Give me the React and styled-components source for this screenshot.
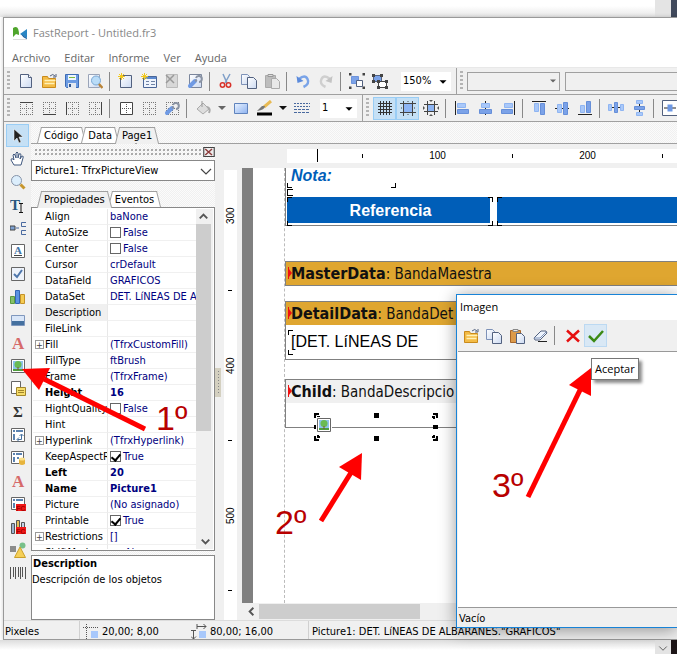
import React from 'react'
import styled, { createGlobalStyle, css } from 'styled-components';

const ui = '"DejaVu Sans Condensed", "DejaVu Sans", sans-serif';
const caption = '"Open Sans", "Noto Sans", sans-serif';
const arial = '"Liberation Sans", Arial, sans-serif';
const serif = '"Liberation Serif", serif';

/* ---------- icons ---------- */

const sheet = <path d="M2.500 1.500h8l3 3v10h-11z" fill="url(#paper)" stroke="#52617f"/>;
const dots = <path d="M2 2.500h13M2 8.500h13M2 14.500h13M2.500 2v13M8.500 2v13M14.500 2v13" stroke="#777" strokeDasharray="1 1"/>;
const wrench = <path d="M3 13l5-5" stroke="#6f9ae4" strokeWidth="4" strokeLinecap="round"/>;
const wrenchHead = <path d="M8 8l2-1M9 5a3 3 0 1 1 3 4" stroke="#8a93a3" strokeWidth="2" fill="none"/>;
const star = <path d="M3.500 0v7M0 3.500h7M1 1l5 5M6 1L1 6" stroke="#f2c81c" strokeWidth="1"/>;
const fcBadge = (
    <>
        <path d="M6 8h10v7H6z" fill="#f01818"/>
        <text x="6" y="15" fontFamily={arial} fontSize="7" fontWeight="bold" fill="#a00">FC</text>
    </>
);

const alignIcon = (line, a, b) => (
    <>
        <path d={line} stroke="#222"/>
        <path d={a} fill="#a9c8f9" stroke="#8fb5f2"/>
        <path d={b} fill="#7ba2e8" stroke="#668fd9"/>
    </>
);

const icons = {
    logo: <><path d="M1 3q6-4 6 7l-3-1-3 3z" fill="#4fa52c"/><path d="M15 4v9L8 9z" fill="#2a86c4"/><path d="M9 9l6 4v1q-4-1-6-5z" fill="#1b5f9e"/><path d="M1 14.500h14" stroke="#ddd"/></>,
    page: <>{sheet}<path d="M10.500 1.500v3h3" fill="#fff" stroke="#52617f"/></>,
    open: <><path d="M1.500 14.500v-11h5l1 2h7v9z" fill="#f3bb45" stroke="#c98a1b"/><path d="M3.500 7.500h11M3.500 10.500h10" stroke="#fff1b8" strokeWidth="1.500"/><path d="M9 3q3-3 5 0M15 1v3h-3" stroke="#52617f" fill="none"/></>,
    save: <><path d="M1.500 1.500h13v13h-12l-1-1z" fill="#6c9be2" stroke="#3d6cb5"/><path d="M4 2h8v5H4z" fill="#eef6ff"/><path d="M5 4.500h6" stroke="#7cba3d"/><path d="M4 10h8v5H4z" fill="#e4e9f0"/><path d="M6 11v3" stroke="#33578f" strokeWidth="2"/></>,
    preview: <><path d="M1.500 1.500h11v13h-11z" fill="url(#paper)" stroke="#9aa4b8"/><circle cx="9" cy="7.500" r="4.500" fill="#b9dcf8" stroke="#7ba8d4"/><path d="M12 11l3.500 4" stroke="#b98438" strokeWidth="2.500"/></>,
    newPage: <><path d="M2.500 2.500h11v12h-11z" fill="url(#paper)" stroke="#52617f"/>{star}</>,
    newDialog: <><path d="M2.500 3.500h13v11h-13z" fill="#eef4fd" stroke="#4a6698"/><path d="M3 5h12" stroke="#5d8ad0" strokeWidth="2"/><path d="M5 8.500h3M5 11.500h3M10 8.500h4M10 11.500h4" stroke="#6e82a5"/>{star}</>,
    removePage: <><path d="M2.500 1.500h11v13h-11z" fill="#d8d8d8" stroke="#bbb"/><path d="M2 2l8 8M10 2l-8 8" stroke="#999" strokeWidth="1.500"/></>,
    pageSetup: <><path d="M2.500 1.500h12v13h-12z" fill="url(#paper)" stroke="#7b869c"/>{wrench}{wrenchHead}</>,
    cut: <><path d="M5 1l4 9M12 1L7 10" stroke="#7f9fc8" strokeWidth="1.500"/><circle cx="4.500" cy="12" r="2.200" fill="none" stroke="#d8322a" strokeWidth="1.500"/><circle cx="10.500" cy="12" r="2.200" fill="none" stroke="#d8322a" strokeWidth="1.500"/></>,
    copy: <><path d="M.5 1.500h6l2 2v8h-8z" fill="url(#paper)" stroke="#7e92b8"/><path d="M6.500 4.500h6l3 3v8h-9z" fill="url(#paper)" stroke="#52617f"/></>,
    pasteOff: <><path d="M1.500 2.500h10v12h-10z" fill="#bdbdbd" stroke="#aaa"/><path d="M4 1.500h5v2H4z" fill="#ddd" stroke="#999"/><path d="M7.500 5.500h5l3 3v7h-8z" fill="#e8e8e8" stroke="#aaa"/></>,
    paste: <><path d="M1.500 2.500h10v12h-10z" fill="#dc9a4a" stroke="#a8672a"/><path d="M4 1.500h5v2H4z" fill="#eee" stroke="#888"/><path d="M7.500 5.500h5l3 3v7h-8z" fill="url(#paper)" stroke="#52617f"/></>,
    undo: <><path d="M4 6q6-5 8.500 0t-4 8" fill="none" stroke="#7aa4e8" strokeWidth="2.500"/><path d="M1.500 3l1 7 6-2z" fill="#5c8bdc"/></>,
    redo: <><path d="M12 6q-6-5-8.500 0t4 8" fill="none" stroke="#cfcfcf" strokeWidth="2.500"/><path d="M14.500 3l-1 7-6-2z" fill="#c4c4c4"/></>,
    group: <><path d="M2.500 3.500h7v7h-7z" fill="#7ba2e8" stroke="#6d93dc"/><path d="M7.500 7.500h6v6h-6z" fill="#fff" stroke="#52617f"/><path d="M0 0h2.500v2.500H0zM13.500 0H16v2.500h-2.500zM0 13.500h2.500V16H0zM13.500 13.500H16V16h-2.500z" fill="#444"/></>,
    ungroup: <><path d="M1.500 2.500h8v6h-8z" fill="#7ba2e8" stroke="#52617f"/><path d="M6.500 8.500h8v6h-8z" fill="#fff" stroke="#444"/><path d="M0 1h3v3H0zM8 1h3v3H8zM0 7h3v3H0zM5 7h3v3H5zM13 7h3v3h-3zM5 13h3v3H5zM13 13h3v3h-3z" fill="#444"/></>,
    frameTop: <>{dots}<path d="M2 2.500h13" stroke="#444"/></>,
    frameBottom: <>{dots}<path d="M2 14.500h13" stroke="#444"/></>,
    frameLeft: <>{dots}<path d="M2.500 2v13" stroke="#444"/></>,
    frameRight: <>{dots}<path d="M14.500 2v13" stroke="#444"/></>,
    frameAll: <><path d="M2.500 2.500h12v12h-12z" fill="#fff" stroke="#444"/><path d="M4 8.500h9M8.500 4v9" stroke="#555" strokeDasharray="1 1"/></>,
    frameNone: dots,
    frameEdit: <>{dots}{wrench}{wrenchHead}</>,
    fill: <><path d="M2 9l6-6 6 6-6 5z" fill="#ddd" stroke="#aaa"/><path d="M7 1v6" stroke="#999"/><path d="M12 7q4 1 2 6" stroke="#aaa" strokeWidth="2" fill="none"/></>,
    rect: <path d="M1.500 3.500h13v10h-13z" fill="url(#blue)" stroke="#5f83bd"/>,
    brush: <><path d="M15 1L8 7" stroke="#e8ba53" strokeWidth="3"/><path d="M9 6q0 4-8 5l5-5z" fill="#777"/><path d="M1 14h15" stroke="#000" strokeWidth="3"/></>,
    lines: <><path d="M0 3.500h16M0 6.500h16" stroke="#49699f" strokeDasharray="2 1"/><path d="M0 9.500h16M0 12.500h16" stroke="#49699f" strokeDasharray="3 1"/></>,
    grid: <path d="M3.500 1v14M6.500 1v14M9.500 1v14M12.500 1v14M1 3.500h14M1 6.500h14M1 9.500h14M1 12.500h14" stroke="#333"/>,
    snap: <><path d="M4 4h8v8H4z" fill="#8db5f4"/><path d="M3.500 1v15M12.500 1v15M0 3.500h16M0 12.500h16" stroke="#444"/><path d="M1 8h1M8 1v1M14 8h1M8 14v1" stroke="#444"/></>,
    fit: <><path d="M4 4h8v8H4z" fill="#8db5f4"/><path d="M4.500 1v14M11.500 1v14M1 4.500h14M1 11.500h14" stroke="#444"/><path d="M0 6l2 2-2 2M16 6l-2 2 2 2M6 0l2 2 2-2M6 16l2-2 2 2" fill="#555"/></>,
    left: alignIcon('M1.500 1v14', 'M3.500 3.500h8v4h-8z', 'M3.500 9.500h11v4h-11z'),
    center: alignIcon('M8.500 1v14', 'M4.500 3.500h8v4h-8z', 'M2.500 9.500h12v4h-12z'),
    right: alignIcon('M14.500 1v14', 'M4.500 3.500h8v4h-8z', 'M1.500 9.500h11v4h-11z'),
    top: alignIcon('M1 1.500h14', 'M3.500 3.500h4v8h-4z', 'M9.500 3.500h4v11h-4z'),
    middle: alignIcon('M1 8.500h14', 'M3.500 4.500h4v8h-4z', 'M9.500 2.500h4v12h-4z'),
    bottom: alignIcon('M1 14.500h14', 'M3.500 5.500h4v7h-4z', 'M9.500 1.500h4v11h-4z'),
    spaceH: alignIcon('M1 7.500h14', 'M.5 4.500h3v6h-3zM12.500 4.500h3v6h-3z', 'M6.500 2.500h3v10h-3z'),
    spaceV: alignIcon('M8.500 1v14', 'M5.500.5h6v3h-6zM5.500 12.500h6v3h-6z', 'M3.500 6.500h10v3h-10z'),
    centerH: <><path d="M.5.5h15v15H.5z" fill="#fff" stroke="#52617f"/><path d="M2 8h12" stroke="#222"/><path d="M5.500 4.500h5v7h-5z" fill="#6d98e4"/></>,

    pointer: <path d="M4 1v12l3-3 2 5 2-1-2-5h4z" fill="#222" stroke="#fff" strokeWidth=".5"/>,
    hand: <path d="M4 14l-3-5q0-2 2-1l1 1-1-5q1-2 2 0l1 3V2q1-2 2 0v5l1-4q2-1 2 1l-1 4 2-3q2 0 1 2l-2 7z" fill="#fff" stroke="#41597f"/>,
    zoom: <><circle cx="6.500" cy="6.500" r="5" fill="#dceefc" stroke="#8693a8"/><path d="M10.500 10.500l4 4" stroke="#c7962d" strokeWidth="3"/></>,
    textEdit: <><text x="0" y="13" fontFamily={serif} fontSize="15" fontWeight="bold" fill="#28567e">T</text><path d="M9 6.500h4M11 7v8M9 15.500h4" stroke="#111"/></>,
    band: <><path d="M0 6h5v4H0z" fill="#7da1d3" stroke="#444"/><path d="M6 8h3M16 2.500h-4.500v4H16M16 10.500h-4.500v4H16" stroke="#49699f" fill="none"/></>,
    memo: <><path d="M1.500 1.500h13v13h-13z" fill="#fff" stroke="#666"/><text x="4" y="11" fontFamily={serif} fontSize="11" fontWeight="bold" fill="#3f73a5">A</text><path d="M4 12.500h8" stroke="#444"/></>,
    check: <><path d="M1.500 1.500h13v13h-13z" fill="#edf2fa" stroke="#666"/><path d="M4 8l3 3 5-7" stroke="#4d76ac" strokeWidth="2" fill="none"/></>,
    chart: <><path d="M.5 7.500h4v7h-4z" fill="#85c168" stroke="#5b9a40"/><path d="M5.500 1.500h4v13h-4z" fill="#5b93e2" stroke="#3467b4"/><path d="M10.500 5.500h4v9h-4z" fill="#f5cb52" stroke="#c4922a"/></>,
    bandGroup: <><path d="M1.500 3.500h13v10h-13z" fill="#d9e6f8" stroke="#7f97bd"/><path d="M2 9h12v4H2z" fill="#44709f"/></>,
    richText: <text x="2" y="14" fontFamily={serif} fontSize="17" fontWeight="bold" fill="#d66a6a">A</text>,
    picture: <><path d="M1.500 1.500h13v13h-13z" fill="#fff" stroke="#666"/><path d="M3 3h10v10H3z" fill="#8ec3ec"/><path d="M3 11h10v2H3z" fill="#4f9e3d"/><circle cx="8" cy="6.500" r="3.500" fill="#6abb52"/><path d="M8 9v3" stroke="#7a5326"/></>,
    subreport: <><path d="M1.500.5h9v12h-9z" fill="#fff" stroke="#666"/><path d="M6.500 6.500h9v8h-9z" fill="#f7dd6a" stroke="#a2862a"/><path d="M8 9.500h6M8 11.500h6" stroke="#a2862a"/></>,
    sum: <text x="3" y="13" fontFamily={serif} fontSize="15" fontWeight="bold" fill="#333">Σ</text>,
    cross: <><path d="M1.500 1.500h13v13h-13z" fill="#fff" stroke="#666"/><path d="M3 4h2M6 4h7M4 7v6" stroke="#5c83b0" strokeWidth="2"/><path d="M7.500 12.500h4v-5M9.500 9l2-2 2 2M9 10.500l-2 2 2 2" stroke="#44709f" fill="none"/></>,
    dbCross: <><path d="M1.500 1.500h12v12h-12z" fill="#fff" stroke="#666"/><path d="M3 4h2M6 4h6M4 7v5M7 8h2" stroke="#5c83b0" strokeWidth="2"/><path d="M9 9v5q3 2 6 0V9z" fill="#e7b43d"/><ellipse cx="12" cy="9" rx="3" ry="1.500" fill="#fbe08a"/></>,
    fcTable: <><path d="M1.500 1.500h13v12h-13z" fill="#fff" stroke="#666"/><path d="M3 4h2M6 4h7M4 7v5" stroke="#5c83b0" strokeWidth="2"/>{fcBadge}</>,
    fcChart: <><path d="M1.500 4.500h3v10h-3z" fill="#9ab0cf" stroke="#555"/><path d="M6.500 1.500h3v12h-3z" fill="#e5bf5c" stroke="#555"/><path d="M11.500 3.500h3v10h-3z" fill="#c5d3e8" stroke="#555"/>{fcBadge}</>,
    shapes: <><path d="M0 4h6v6H0z" fill="#8b8b8b"/><circle cx="12.500" cy="3.500" r="3" fill="#78c08a"/><path d="M10 5l5.500 10.500h-11z" fill="#f5cf57" stroke="#caa02a"/></>,
    barcode: <path d="M.5 2v12M3.500 2v10M5.500 2v12M8.500 2v10M10.500 2v12M12.500 2v10M15.500 2v12" stroke="#555"/>,

    erase: <><path d="M2 10l7-7h5l1 2-7 7H3z" fill="#eef4fd" stroke="#52617f"/><path d="M2 10h6l6-6" stroke="#7e92b8" fill="none"/><path d="M6 13.500h9" stroke="#222"/></>,
    cancel: <path d="M2 2.500l12 11M14 2.500l-12 11" stroke="#e60f0f" strokeWidth="2.500"/>,
    accept: <path d="M1 8l5 5 9-10" fill="none" stroke="#3b8a14" strokeWidth="2.500"/>,
    position: <><path d="M0 3.500h16M3.500 0v16" stroke="#555" strokeDasharray="1 1"/><path d="M8 7h7v7H8z" fill="#a8c8fb"/></>,
    size: <><path d="M6 2.500h9M12.500 0L15 2.500 12.500 5M6 0v5M2.500 6v9M0 12.500L2.500 15 5 12.500M0 6.500h5" stroke="#555" fill="none"/><path d="M8 7h7v7H8z" fill="#a8c8fb"/></>,
    closePanel: <><path d="M1 2h14v12H1z" fill="#eee" stroke="#444" strokeWidth="1.500"/><path d="M3 4l9 8M12 4l-9 8" stroke="#8c3a3a" strokeWidth="2"/></>,
    down: <path d="M4 6h8l-4 4z" fill="currentColor"/>,
    chevronDown: <path d="M3 6l5 5 5-5" fill="none" stroke="currentColor" strokeWidth="1.200"/>,
    chevronUp: <path d="M4 10l4-4 4 4" fill="none" stroke="currentColor" strokeWidth="2"/>,
    chevronLeft: <path d="M10 4L6 8l4 4" fill="none" stroke="currentColor" strokeWidth="2"/>,
};

const Svg = styled.svg`
    display: block;
    flex: none;
    width: ${p => p.$size || 16}px;
    height: ${p => p.$size || 16}px;
`;

const Icon = ({ name, size }) => <Svg viewBox="0 0 16 16" $size={size} aria-hidden="true">{icons[name]}</Svg>;

/* ---------- data ---------- */

const tools = ['pointer', 'hand', 'zoom', 'textEdit', 'band', 'memo', 'check', 'chart', 'bandGroup', 'richText', 'picture',
    'subreport', 'sum', 'cross', 'dbCross', 'richText', 'fcTable', 'fcChart', 'shapes', 'barcode'];

const properties = [
    { name: 'Align', value: 'baNone' },
    { name: 'AutoSize', checked: false },
    { name: 'Center', checked: false },
    { name: 'Cursor', value: 'crDefault' },
    { name: 'DataField', value: 'GRAFICOS' },
    { name: 'DataSet', value: 'DET. LíNEAS DE ALBARANES' },
    { name: 'Description', value: '', selected: true },
    { name: 'FileLink', value: '' },
    { name: 'Fill', value: '(TfrxCustomFill)', expand: true },
    { name: 'FillType', value: 'ftBrush' },
    { name: 'Frame', value: '(TfrxFrame)', expand: true },
    { name: 'Height', value: '16', bold: true },
    { name: 'HightQuality', checked: false },
    { name: 'Hint', value: '' },
    { name: 'Hyperlink', value: '(TfrxHyperlink)', expand: true },
    { name: 'KeepAspectRatio', checked: true },
    { name: 'Left', value: '20', bold: true },
    { name: 'Name', value: 'Picture1', bold: true },
    { name: 'Picture', value: '(No asignado)' },
    { name: 'Printable', checked: true },
    { name: 'Restrictions', value: '[]', expand: true },
    { name: 'ShiftMode', value: 'smAlways' },
];

function Tools({ names, pressed = [] }) {
    return names.map((name, i) => (
        name === '|'
            ? <Separator key={i} />
            : <ToolButton key={i} aria-label={name} $pressed={pressed.includes(name)}><Icon name={name} /></ToolButton>
    ))
}

function PropertyRow({ name, value, checked, expand, selected, bold }) {
    return (
        <tr>
            <NameCell $selected={selected} $bold={bold}>
                <div>
                    <ExpandSlot>{expand && <ExpandButton aria-label={`Expand ${name}`}>+</ExpandButton>}</ExpandSlot>
                    {name}
                </div>
            </NameCell>
            <ValueCell $bold={bold}>
                {checked === undefined ? <div>{value}</div> : (
                    <CheckLabel><CheckBox type="checkbox" defaultChecked={checked} />{checked ? 'True' : 'False'}</CheckLabel>
                )}
            </ValueCell>
        </tr>
    )
}

function Inspector() {
    return (
        <InspectorStyled>
            <Grip><i /><button aria-label="Cerrar"><Icon name="closePanel" size={12} /></button></Grip>
            <ObjectSelect>
                <select aria-label="Objeto"><option>Picture1: TfrxPictureView</option></select>
                <Icon name="chevronDown" />
            </ObjectSelect>
            <TabRow $inner>
                <Tab $active>Propiedades</Tab>
                <Tab>Eventos</Tab>
            </TabRow>
            <PropertyBox>
                <TableClip>
                    <PropertyTable>
                        <tbody>{properties.map(p => <PropertyRow key={p.name} {...p} />)}</tbody>
                    </PropertyTable>
                </TableClip>
                <ScrollV>
                    <button aria-label="Subir"><Icon name="chevronUp" size={15} /></button>
                    <ThumbV />
                    <button aria-label="Bajar"><Icon name="chevronUp" size={15} /></button>
                </ScrollV>
            </PropertyBox>
            <HelpBox>
                <strong>Description</strong>
                <p>Descripción de los objetos</p>
            </HelpBox>
        </InspectorStyled>
    )
}

const BandHeader = ({ type, name, plain }) => (
    <BandTitle $plain={plain}>
        <svg width="5" height="13" viewBox="0 0 5 13" aria-hidden="true"><path d="M0 0h1v12H0zM1 2l3 4-3 4z" fill="#f01010"/></svg>
        <b>{type}</b>: <span>{name}</span>
    </BandTitle>
);

function Designer() {
    return (
        <DesignerStyled>
            <RulerH>
                <div>
                    <CursorMark />
                    <span><Tick /></span><span>100</span><span><Tick /></span><span>200</span><span><Tick /></span>
                </div>
            </RulerH>
            <DesignRow>
                <RulerV><span>300</span><span><Tick /></span><span>400</span><span><Tick /></span><span>500</span><span><Tick /></span></RulerV>
                <CanvasColumn>
                    <Canvas>
                        <Margin>
                            <HeaderBand>
                                <NoteMemo>Nota:</NoteMemo>
                                <EmptyMemo />
                                <MemoRow>
                                    <HeadMemo $width={206}><div>Referencia</div></HeadMemo>
                                    <HeadMemo><div /></HeadMemo>
                                </MemoRow>
                            </HeaderBand>
                            <Band $gap={35}><BandHeader type="MasterData" name="BandaMaestra" /></Band>
                            <Band $gap={15}>
                                <BandHeader type="DetailData" name="BandaDet" />
                                <BandBody><LineMemo>[DET. LíNEAS DE</LineMemo></BandBody>
                            </Band>
                            <Band $gap={19}>
                                <BandHeader type="Child" name="BandaDescripcio" plain />
                                <BandBody $short>
                                    <Selection viewBox="0 0 124 28" aria-hidden="true">
                                        <path d="M0 0h5v5H0zM60 0h5v5h-5zM119 0h5v5h-5zM0 12h5v4H0zM119 12h5v4h-5zM0 23h5v5H0zM60 23h5v5h-5zM119 23h5v5h-5z" />
                                        <path d="M2.500 8v-5.500h6M2.500 20v5.500h6M121.500 8v-5.500h-6M121.500 20v5.500h-6" fill="none" stroke="#fff" />
                                        <path d="M3 5.500h2M5.500 3v2M3 22.500h2M5.500 23v2M119 5.500h2M118.500 3v2M119 22.500h2M118.500 23v2" stroke="#000" />
                                    </Selection>
                                    <PictureBadge><Icon name="picture" /></PictureBadge>
                                </BandBody>
                            </Band>
                        </Margin>
                    </Canvas>
                    <ScrollH><button aria-label="Izquierda"><Icon name="chevronLeft" size={15} /></button><ThumbH /></ScrollH>
                </CanvasColumn>
            </DesignRow>
        </DesignerStyled>
    )
}

function ImageDialog() {
    return (
        <DialogStyled role="dialog" aria-label="Imagen">
            <DialogTitle>Imagen</DialogTitle>
            <DialogBar>
                <Tools names={['open', 'copy', 'paste', 'erase', '|', 'cancel', 'accept']} pressed={['accept']} />
            </DialogBar>
            <DialogBody />
            <DialogStatus>Vacío</DialogStatus>
            <Tooltip role="tooltip">Aceptar</Tooltip>
        </DialogStyled>
    )
}

function App() {
    return (
        <Page>
            <GlobalStyle />
            <Defs aria-hidden="true">
                <defs>
                    <linearGradient id="paper" x2="1" y2="1"><stop stopColor="#fff"/><stop offset="1" stopColor="#ccdaf2"/></linearGradient>
                    <linearGradient id="blue" x2="1" y2="1"><stop stopColor="#eaf3ff"/><stop offset="1" stopColor="#8db2f0"/></linearGradient>
                </defs>
            </Defs>
            <Backdrop><i /><b /></Backdrop>
            <Window>
                <TitleBar><Icon name="logo" /><span>FastReport - Untitled.fr3</span></TitleBar>
                <MenuBar>
                    {['Archivo', 'Editar', 'Informe', 'Ver', 'Ayuda'].map(m => <button key={m}>{m}</button>)}
                </MenuBar>
                <ToolRow>
                    <ToolBar>
                        <Tools names={['page', 'open', 'save', 'preview', '|', 'newPage', 'newDialog', 'removePage', 'pageSetup', '|',
                            'cut', 'copy', 'pasteOff', '|', 'undo', 'redo', '|', 'group', 'ungroup']} />
                        <Combo $width={50} $gap={10}><select aria-label="Zoom"><option>150%</option></select><Icon name="down" size={14} /></Combo>
                    </ToolBar>
                    <ToolBar $last>
                        <Combo $width={93} $gap={0} $disabled><select aria-label="Estilo" disabled /><Icon name="down" size={12} /></Combo>
                        <Combo $width={180} $gap={5} $disabled><select aria-label="Fuente" disabled /><Icon name="down" size={12} /></Combo>
                    </ToolBar>
                </ToolRow>
                <ToolRow>
                    <ToolBar>
                        <Tools names={['frameTop', 'frameBottom', 'frameLeft', 'frameRight', '|', 'frameAll', 'frameNone', 'frameEdit', '|', 'fill']} />
                        <DropButton aria-label="Color de relleno" $muted><Icon name="down" /></DropButton>
                        <Tools names={['rect', 'brush']} />
                        <DropButton aria-label="Color de marco"><Icon name="down" /></DropButton>
                        <Tools names={['lines']} />
                        <Combo $width={37} $gap={7}><select aria-label="Ancho"><option>1</option></select><Icon name="down" size={14} /></Combo>
                    </ToolBar>
                    <ToolBar $last>
                        <Tools names={['grid', 'snap', 'fit', '|', 'left', 'center', 'right', '|', 'top', 'middle', 'bottom', '|',
                            'spaceH', 'spaceV', '|', 'centerH']} pressed={['grid', 'snap']} />
                    </ToolBar>
                </ToolRow>
                <Workspace>
                    <Palette>
                        {tools.map((name, i) => <ToolButton key={i} aria-label={name} $pressed={i === 0}><Icon name={name} /></ToolButton>)}
                    </Palette>
                    <Main>
                        <TabRow>
                            <Tab>Código</Tab>
                            <Tab>Data</Tab>
                            <Tab $active>Page1</Tab>
                        </TabRow>
                        <Panels>
                            <Inspector />
                            <Splitter><i /></Splitter>
                            <Designer />
                        </Panels>
                    </Main>
                </Workspace>
                <StatusBar>
                    <StatusCell $width={75}>Pixeles</StatusCell>
                    <StatusCell $width={229}>
                        <Icon name="position" /><StatusValue>20,00; 8,00</StatusValue>
                        <Icon name="size" /><StatusValue>80,00; 16,00</StatusValue>
                    </StatusCell>
                    <StatusCell>Picture1: DET. LíNEAS DE ALBARANES."GRAFICOS"</StatusCell>
                </StatusBar>
            </Window>
            <Backdrop $bottom><i><Icon name="chevronDown" size={12} /></i><b /></Backdrop>

            <ImageDialog />

            <Arrow $x={22} $y={367} width="128" height="68" aria-hidden="true">
                <path d="M22 12L123 62" stroke="#f00" strokeWidth="5" /><path d="M0 2l28-1-11 22z" fill="#f00" />
            </Arrow>
            <Step $x={156} $y={399}>1º</Step>
            <Arrow $x={318} $y={453} width="48" height="72" aria-hidden="true">
                <path d="M3 68L34 18" stroke="#f00" strokeWidth="5" /><path d="M44 0L21 14l22 13z" fill="#f00" />
            </Arrow>
            <Step $x={275} $y={503}>2º</Step>
            <Arrow $x={525} $y={368} width="68" height="132" aria-hidden="true">
                <path d="M3 129L56 20" stroke="#f00" strokeWidth="5" /><path d="M66 0L44 17l22 11z" fill="#f00" />
            </Arrow>
            <Step $x={492} $y={466}>3º</Step>
        </Page>
    )
}

/* ---------- styles ---------- */

const GlobalStyle = createGlobalStyle`
    *{
        box-sizing: border-box;
    }
    body{
        margin: 0;
        background: #fff;
        font: 11px/16px ${ui};
        color: #000;
    }
    button, select, input{
        margin: 0;
        padding: 0;
        border: 0;
        border-radius: 0;
        background: none;
        color: inherit;
        font: inherit;
        appearance: none;
    }
    p{
        margin: 0;
    }
`;

const checker = css`
    background: repeating-conic-gradient(#f0f0f0 0 25%, #fbfbfb 0 50%) 0 0/2px 2px;
`;

const Page = styled.div`
    position: relative;
    display: flex;
    flex-direction: column;
    height: 100vh;
    min-height: 640px;
    overflow: hidden;
`;

const Defs = styled.svg`
    position: absolute;
    width: 0;
    height: 0;
`;

const Backdrop = styled.div`
    display: flex;
    justify-content: flex-end;
    height: ${p => p.$bottom ? 14 : 17}px;
    background: ${p => p.$bottom ? 'linear-gradient(#ddd, #fff 10px)' : 'linear-gradient(#fff 6px, #e6e6e6)'};
    i{
        display: flex;
        align-items: flex-end;
        justify-content: center;
        width: 16px;
        background: #e4e4e4;
        color: #555;
    }
    b{
        width: 6px;
        background: ${p => p.$bottom ? '#1d1517' : '#414a5c'};
    }
`;

const Window = styled.main`
    flex: 1;
    min-height: 0;
    display: flex;
    flex-direction: column;
    margin-left: 3px;
    border: 1px solid #999;
    border-right: 0;
    background: #f0f0f0;
    box-shadow: 0 0 4px rgba(0, 0, 0, .2);
`;

const TitleBar = styled.header`
    display: flex;
    align-items: center;
    gap: 5px;
    height: 29px;
    padding-left: 8px;
    background: #fff;
    color: #888;
    font-family: ${caption};
`;

const MenuBar = styled.nav`
    display: flex;
    height: 21px;
    padding: 2px 0 0 1px;
    border-bottom: 1px solid #e8e8e8;
    background: #fff;
    button{
        padding: 0 7px;
        color: #666;
        font-family: ${caption};
    }
`;

const ToolRow = styled.div`
    display: flex;
    height: 27px;
    border-bottom: 1px solid #a0a0a0;
    overflow: hidden;
`;

const ToolBar = styled.div`
    display: flex;
    align-items: center;
    flex: ${p => p.$last ? '1 0 auto' : 'none'};
    padding-right: 5px;
    border-right: ${p => p.$last ? 0 : '1px solid #a0a0a0'};
    &::before{
        content: '';
        width: 3px;
        height: 20px;
        margin: 0 4px 0 3px;
        background: repeating-linear-gradient(#b4b4b4 0 2px, transparent 2px 4px);
    }
`;

const ToolButton = styled.button`
    display: flex;
    align-items: center;
    justify-content: center;
    flex: none;
    width: 23px;
    height: 23px;
    ${p => p.$pressed && css`
        border: 1px solid #99cdf5;
        background: #c5e0f5;
    `}
`;

const DropButton = styled(ToolButton)`
    width: 15px;
    color: ${p => p.$muted ? '#666' : '#111'};
`;

const Separator = styled.span`
    flex: none;
    width: 1px;
    height: 19px;
    margin: 0 4px 0 3px;
    background: #888;
`;

const Combo = styled.div`
    position: relative;
    flex: none;
    width: ${p => p.$width}px;
    height: 19px;
    margin-left: ${p => p.$gap}px;
    border: 1px solid ${p => p.$disabled ? '#a0a0a0' : '#fff'};
    background: ${p => p.$disabled ? '#f0f0f0' : '#fff'};
    color: ${p => p.$disabled ? '#666' : '#000'};
    select{
        width: 100%;
        height: 17px;
        padding-left: 1px;
    }
    svg{
        position: absolute;
        right: 0;
        top: 2px;
        pointer-events: none;
    }
`;

const Workspace = styled.div`
    flex: 1;
    min-height: 0;
    display: flex;
`;

const Palette = styled.div`
    flex: none;
    width: 27px;
    padding: 2px;
    overflow: hidden;
`;

const Main = styled.div`
    flex: 1;
    min-width: 0;
    display: flex;
    flex-direction: column;
`;

const TabRow = styled.div`
    display: flex;
    align-items: flex-end;
    flex: none;
    height: ${p => p.$inner ? 26 : 22}px;
    padding-left: 9px;
    border-bottom: ${p => p.$inner ? 0 : '1px solid #a0a0a0'};
    ${checker}
`;

const Tab = styled.button`
    position: relative;
    z-index: ${p => p.$active ? 2 : 1};
    isolation: isolate;
    height: ${p => p.$active ? 17 : 16}px;
    margin: 0 0 ${p => p.$active ? -1 : 0}px -2px;
    padding: 1px 6px 0;
    line-height: 16px;
    &::before, &::after{
        content: '';
        position: absolute;
        z-index: -1;
        top: 0;
        bottom: 0;
        border: solid #a0a0a0;
        background: ${p => p.$active ? '#f0f0f0' : '#fff'};
    }
    &::before{
        left: 1px;
        right: 50%;
        border-width: 1px 0 0 1px;
        transform: skewX(-14deg);
    }
    &::after{
        left: 45%;
        right: 1px;
        border-width: 1px 1px 0 0;
        transform: skewX(14deg);
    }
`;

const Panels = styled.div`
    flex: 1;
    min-height: 0;
    display: flex;
`;

const InspectorStyled = styled.section`
    flex: none;
    display: flex;
    flex-direction: column;
    width: 184px;
    ${checker}
`;

const Grip = styled.div`
    display: flex;
    align-items: center;
    height: 16px;
    padding: 0 0 0 3px;
    i{
        flex: 1;
        height: 8px;
        background: radial-gradient(#aaa 1px, transparent 1px) 0 0/4px 4px;
    }
    button{
        margin-left: 2px;
    }
`;

const ObjectSelect = styled.div`
    position: relative;
    height: 21px;
    border: 1px solid #888;
    background: #fff;
    select{
        width: 100%;
        height: 19px;
        padding-left: 3px;
    }
    svg{
        position: absolute;
        right: 0;
        top: 2px;
        color: #444;
        pointer-events: none;
    }
`;

const PropertyBox = styled.div`
    flex: 1;
    min-height: 0;
    display: flex;
    padding: 1px;
    border: 1px solid #888;
    background: #fff;
`;

const TableClip = styled.div`
    flex: 1;
    min-width: 0;
    overflow: hidden;
`;

const PropertyTable = styled.table`
    width: 100%;
    table-layout: fixed;
    border-spacing: 0;
    th, td{
        height: 16px;
        padding: 0;
        border-bottom: 1px solid #f0f0f0;
        font-weight: normal;
        line-height: 15px;
        text-align: left;
    }
    th div, td div, td label{
        display: flex;
        height: 15px;
        overflow: hidden;
        white-space: nowrap;
    }
`;

const NameCell = styled.th.attrs({ scope: 'row' })`
    width: 75px;
    border-right: 1px solid #e8e8e8;
    background: ${p => p.$selected ? '#f0f0f0' : '#fff'};
    && div{
        font-weight: ${p => p.$bold ? 'bold' : 'normal'};
    }
`;

const ValueCell = styled.td`
    color: #000080;
    div{
        padding-left: 2px;
        font-weight: ${p => p.$bold ? 'bold' : 'normal'};
    }
`;

const ExpandSlot = styled.span`
    flex: none;
    display: flex;
    align-items: center;
    width: 12px;
    padding-left: 2px;
`;

const ExpandButton = styled.button`
    width: 9px;
    height: 9px;
    border: 1px solid #999;
    color: #444;
    font-size: 9px;
    line-height: 6px;
`;

const CheckLabel = styled.label`
    align-items: center;
    gap: 2px;
    padding-left: 2px;
`;

const CheckBox = styled.input`
    flex: none;
    width: 11px;
    height: 11px;
    border: 1px solid #666;
    background: #fff;
    &:checked::after{
        content: '';
        display: block;
        width: 4px;
        height: 7px;
        margin-left: 2px;
        border: solid #000;
        border-width: 0 2px 2px 0;
        transform: rotate(40deg);
    }
`;

const ScrollV = styled.div`
    flex: none;
    display: flex;
    flex-direction: column;
    width: 17px;
    background: #f0f0f0;
    color: #555;
    button:last-child{
        margin-top: auto;
        transform: rotate(180deg);
    }
`;

const ThumbV = styled.div`
    width: 15px;
    height: 61%;
    background: #cdcdcd;
`;

const HelpBox = styled.div`
    flex: none;
    height: 65px;
    margin-top: 4px;
    border: 1px solid #888;
    background: #fff;
    strong{
        padding-left: 1px;
    }
`;

const Splitter = styled.div`
    flex: none;
    display: flex;
    align-items: center;
    width: 8px;
    i{
        width: 6px;
        height: 29px;
        background: repeating-linear-gradient(#888 0 1px, transparent 1px 3px) 3px 3px/1px 22px no-repeat #d4d0c0;
    }
`;

const DesignerStyled = styled.section`
    flex: 1;
    min-width: 0;
    display: flex;
    flex-direction: column;
`;

const RulerH = styled.div`
    flex: none;
    height: 24px;
    padding: 5px 0 5px 64px;
    overflow: hidden;
    font: 10px/14px ${arial};
    div{
        display: flex;
        height: 14px;
        background: #fff;
    }
    span{
        flex: none;
        display: flex;
        align-items: center;
        justify-content: center;
        width: 75px;
    }
`;

const CursorMark = styled.i`
    flex: none;
    width: 1px;
    height: 13px;
    margin: 0 7px 0 30px;
    background: #000;
`;

const Tick = styled.i`
    width: 1px;
    height: 4px;
    background: #000;
`;

const DesignRow = styled.div`
    flex: 1;
    min-height: 0;
    display: flex;
`;

const RulerV = styled.div`
    flex: none;
    width: 13px;
    margin: 2px 5px 0 1px;
    padding-top: 8px;
    background: #fff;
    overflow: hidden;
    font: 10px/13px ${arial};
    span{
        display: flex;
        align-items: center;
        justify-content: center;
        width: 13px;
        height: 75px;
        writing-mode: vertical-rl;
        transform: rotate(180deg);
    }
    i{
        width: 4px;
        height: 1px;
    }
`;

const CanvasColumn = styled.div`
    flex: 1;
    min-width: 0;
    display: flex;
    flex-direction: column;
`;

const Canvas = styled.div`
    flex: 1;
    min-height: 0;
    padding-left: 31px;
    border-left: 11px solid #808080;
    background: #fff;
    overflow: hidden;
`;

const Margin = styled.div`
    height: 100%;
    border-left: 1px dashed #bbb;
`;

const Band = styled.div`
    margin-top: ${p => p.$gap}px;
    border: solid #808080;
    border-width: 1px 0 1px 1px;
`;

const BandTitle = styled.div`
    display: flex;
    align-items: center;
    height: 23px;
    padding-left: 2px;
    background: ${p => p.$plain ? '#f0f0f0' : '#dfa630'};
    color: #111;
    font-size: 15px;
    white-space: pre;
    svg{
        margin-right: -2px;
    }
    b{
        font-size: 16px;
    }
`;

const BandBody = styled.div`
    position: relative;
    height: ${p => p.$short ? 24 : 34}px;
    padding: 5px 2px;
`;

/* corner marks of a report object */
const corner = pos => `linear-gradient(#000, #000) ${pos}/5px 1px no-repeat, linear-gradient(#000, #000) ${pos}/1px 5px no-repeat`;
const left = `${corner('0 0')}, ${corner('0 100%')}`;
const right = `${corner('100% 0')}, ${corner('100% 100%')}`;

const HeaderBand = styled.div`
    height: 58px;
    padding-left: 1px;
    border: solid #808080;
    border-width: 0 0 1px 1px;
`;

const NoteMemo = styled.div`
    width: 109px;
    height: 20px;
    padding-left: 4px;
    background: ${corner('0 100%')}, ${corner('100% 100%')};
    color: #005eb8;
    font: italic bold 16px/16px ${arial};
`;

const EmptyMemo = styled.div`
    width: 6px;
    height: 7px;
    margin: 1px 0;
    border: solid #000;
    border-width: 1px 0 1px 1px;
`;

const MemoRow = styled.div`
    display: flex;
    gap: 4px;
`;

const HeadMemo = styled.div`
    flex: ${p => p.$width ? 'none' : 1};
    width: ${p => p.$width ? p.$width + 'px' : 'auto'};
    height: 29px;
    position: relative;
    padding-right: ${p => p.$width ? 3 : 0}px;
    &::after{
        content: '';
        position: absolute;
        inset: 0;
        background: ${p => p.$width ? `${left}, ${right}` : left};
    }
    div{
        height: 26px;
        padding-left: 4px;
        background: #005eb8;
        color: #fff;
        font: bold 16px/28px ${arial};
        text-align: center;
    }
`;

const LineMemo = styled.div`
    height: 25px;
    padding-left: 3px;
    background: ${left};
    font: 16px/24px ${arial};
`;

const Selection = styled.svg`
    position: absolute;
    left: 28px;
    top: 10px;
    width: 124px;
    height: 28px;
`;

const PictureBadge = styled.span`
    position: absolute;
    left: 30px;
    top: 14px;
    background: #fff;
`;

const ScrollH = styled.div`
    flex: none;
    display: flex;
    height: 17px;
    padding: 1px 0 1px 2px;
    color: #555;
`;

const ThumbH = styled.div`
    width: 161px;
    background: #cdcdcd;
`;

const StatusBar = styled.footer`
    flex: none;
    display: flex;
    height: 19px;
    border-top: 1px solid #dcdcdc;
    line-height: 16px;
    white-space: nowrap;
`;

const StatusCell = styled.div`
    display: flex;
    flex: none;
    align-items: center;
    width: ${p => p.$width ? p.$width + 'px' : 'auto'};
    padding: 3px 0 0 ${p => p.$width === 75 ? 1 : 3}px;
    & + &{
        border-left: 1px solid #d0d0d0;
    }
`;

const StatusValue = styled.span`
    width: 92px;
    padding-left: 3px;
`;

const DialogStyled = styled.section`
    position: absolute;
    left: 456px;
    right: 0;
    top: 294px;
    display: flex;
    flex-direction: column;
    height: 334px;
    border: 1px solid #1883d7;
    border-right: 0;
    background: #f0f0f0;
    box-shadow: 0 2px 16px rgba(0, 0, 0, .4);
`;

const DialogTitle = styled.header`
    height: 25px;
    padding-left: 3px;
    background: #fff;
    font: 11px/24px ${caption};
`;

const DialogBar = styled.div`
    display: flex;
    align-items: center;
    height: 31px;
    padding-left: 2px;
    & > span{
        margin-right: 6px;
    }
    & > button:last-child{
        border-color: #bcd9f2;
        background: #d9e8f5;
    }
`;

const DialogBody = styled.div`
    flex: 1;
    margin-left: 1px;
    border: solid #999;
    border-width: 1px 0;
    background: #fff;
`;

const DialogStatus = styled.footer`
    height: 19px;
    padding-left: 2px;
    line-height: 22px;
`;

const Tooltip = styled.div`
    position: absolute;
    z-index: 3;
    left: 134px;
    top: 63px;
    height: 22px;
    padding: 0 3px;
    border: 1px solid #767676;
    background: #fff;
    box-shadow: 3px 3px 3px rgba(0, 0, 0, .45);
    font: 11px/20px ${caption};
`;

const Arrow = styled.svg`
    position: absolute;
    left: ${p => p.$x}px;
    top: ${p => p.$y}px;
    pointer-events: none;
`;

const Step = styled.span`
    position: absolute;
    left: ${p => p.$x}px;
    top: ${p => p.$y}px;
    color: #b80000;
    font: 34px/38px ${arial};
    pointer-events: none;
`;

export default App;
